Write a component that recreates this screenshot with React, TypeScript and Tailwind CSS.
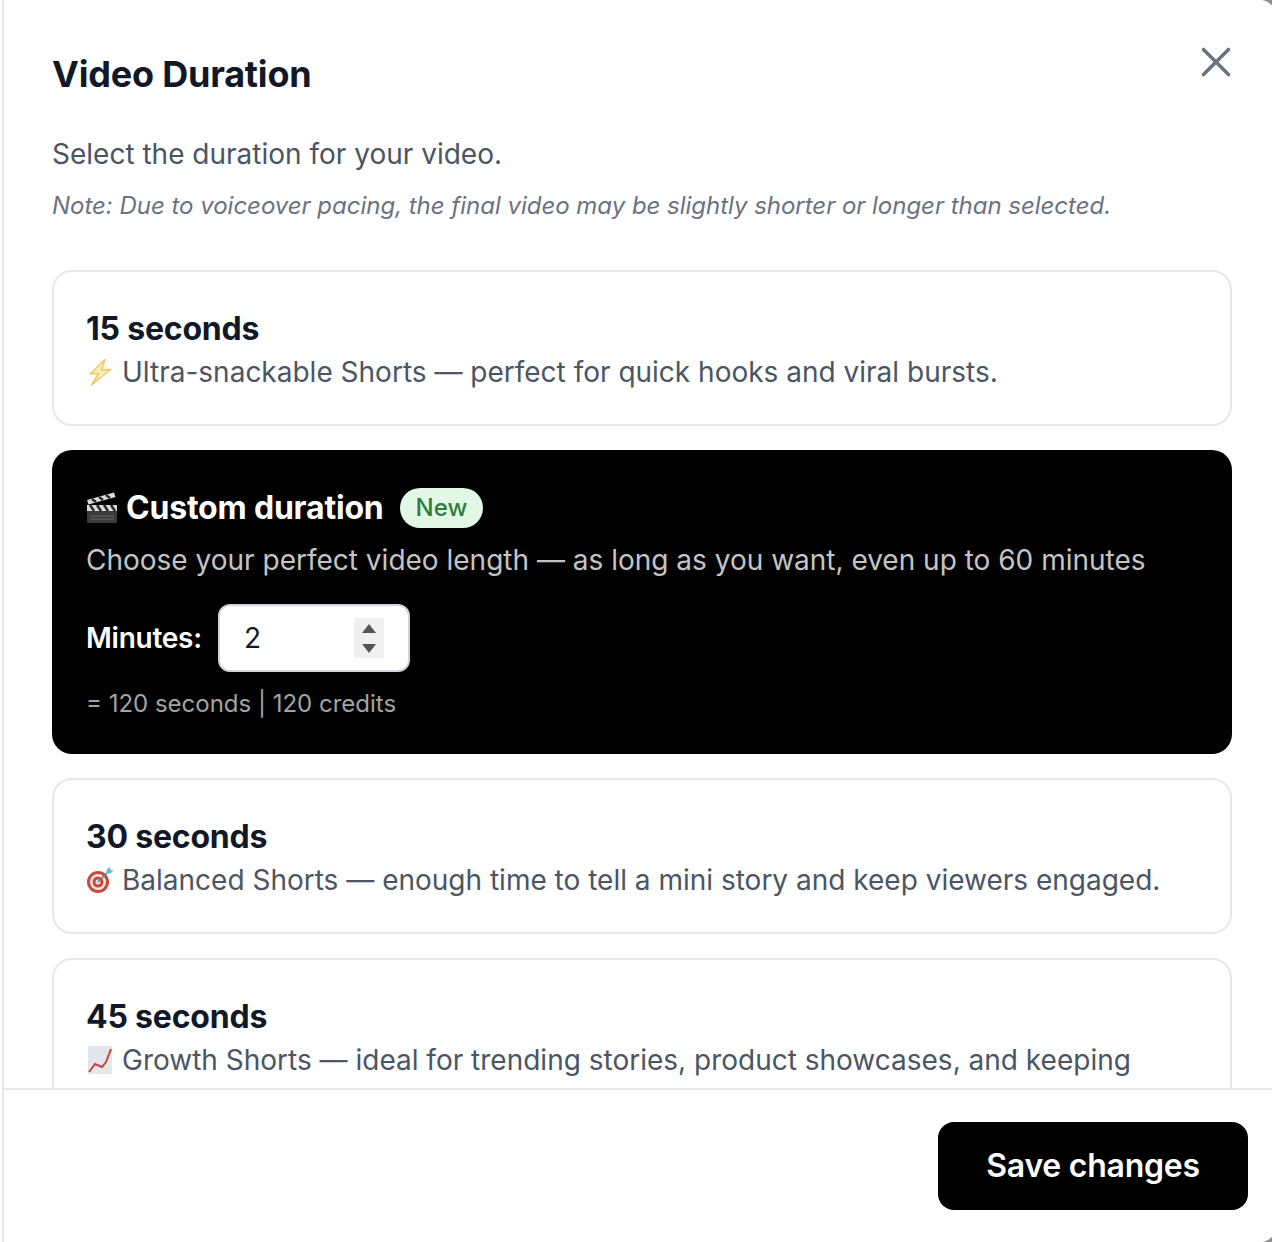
import { X } from "lucide-react";

const FONT = "font-['Inter','Noto_Sans',sans-serif]";

function BoltIcon() {
  return (
    <svg width="28" height="28" viewBox="0 0 28 28" className="shrink-0">
      <path
        d="M19 1.5 L4 16 L12.5 15.5 L5.5 27 L24.5 11.5 L15.5 12 Z"
        fill="#fdeeb5"
        stroke="#f8c566"
        strokeWidth="1.5"
        strokeLinejoin="round"
      />
    </svg>
  );
}

function TargetIcon() {
  return (
    <svg width="28" height="28" viewBox="0 0 28 28" className="shrink-0">
      <circle cx="12" cy="16" r="11" fill="#c8483c" />
      <circle cx="12" cy="16" r="8" fill="#f3e6e0" />
      <circle cx="12" cy="16" r="5.5" fill="#c8483c" />
      <circle cx="12" cy="16" r="2.5" fill="#f3e6e0" />
      <path d="M12 16 L22 6" stroke="#6b7a80" strokeWidth="1.6" />
      <path d="M20 8 L21 3 L24 1 L24.5 4 L27.5 4.5 L25 7 L21 8 Z" fill="#6cbccb" />
    </svg>
  );
}

function ChartIcon() {
  return (
    <svg width="28" height="28" viewBox="0 0 28 28" className="shrink-0">
      <rect x="2" y="0" width="24" height="28" fill="#e3e7ec" />
      <path d="M3 26 L9 18 L16 21 L20 16 L25 3" fill="none" stroke="#c8443c" strokeWidth="2" />
    </svg>
  );
}

function ClapperIcon() {
  return (
    <svg width="32" height="32" viewBox="0 0 32 32" className="shrink-0">
      <rect x="1" y="13" width="30" height="18" rx="1" fill="#3a3a3a" />
      <rect x="1" y="13" width="30" height="6" fill="#dcdcdc" />
      <path d="M4 13 L8 19 M11 13 L15 19 M18 13 L22 19 M25 13 L29 19" stroke="#2b2b2b" strokeWidth="2.5" />
      <path d="M1 8 L28 0.5 L29.5 5 L2.5 12.5 Z" fill="#dcdcdc" />
      <path d="M6 7 L10 10 M13 5 L17 8 M20 3 L24 6" stroke="#2b2b2b" strokeWidth="2.5" />
      <path d="M4 24 H28 M4 27 H28" stroke="#666666" strokeWidth="1" />
    </svg>
  );
}

function OptionCard({
  title,
  icon,
  description,
}: {
  title: string;
  icon: React.ReactNode;
  description: string;
}) {
  return (
    <div className="rounded-[20px] border-2 border-[#e5e7eb] bg-white px-[32px] pt-[37px] pb-[32px]">
      <h3 className="text-[32px] leading-[40px] font-bold tracking-[-0.2px] text-[#111827]">{title}</h3>
      <div className="mt-[3px] flex items-center gap-[8px] text-[28px] leading-[40px] text-[#4b5563]">
        {icon}
        <span>{description}</span>
      </div>
    </div>
  );
}

export default function App() {
  return (
    <div className={`${FONT} h-[1242px] w-[1272px] overflow-hidden border-l-[2px] border-white bg-[#8f8f8f]`}>
      <div className="flex h-full w-[1274px] flex-col overflow-hidden rounded-r-[16px] border-l-[2px] border-[#e5e7eb] bg-white">
        <div className="relative min-h-0 flex-1 overflow-hidden pt-[50px] pr-[44px] pl-[48px]">
          <button type="button" className="absolute top-[37px] right-[35px] text-[#6b7280]">
            <X size={50} strokeWidth={1.7} />
          </button>
          <h2 className="text-[36px] leading-[48px] font-bold tracking-[-0.2px] text-[#111827]">Video Duration</h2>
          <p className="mt-[36px] text-[28px] leading-[40px] text-[#4b5563]">
            Select the duration for your video.
          </p>
          <p className="mt-[16px] text-[24px] leading-[32px] tracking-[-0.02px] text-[#6b7280] italic">
            Note: Due to voiceover pacing, the final video may be slightly shorter or longer than selected.
          </p>
          <div className="mt-[48px] flex flex-col gap-[24px]">
            <OptionCard
              title="15 seconds"
              icon={<BoltIcon />}
              description="Ultra-snackable Shorts — perfect for quick hooks and viral bursts."
            />
            <div className="rounded-[20px] bg-black px-[34px] pt-[38px] pb-[34px]">
              <div className="flex items-center">
                <ClapperIcon />
                <h3 className="ml-[8px] text-[32px] leading-[40px] font-bold tracking-[-0.2px] text-white">
                  Custom duration
                </h3>
                <span className="ml-[16px] rounded-full bg-[#e3f7e6] px-[16px] py-[3px] text-[24px] leading-[34px] font-medium text-[#2f7d3b]">
                  New
                </span>
              </div>
              <p className="mt-[12px] text-[28px] leading-[40px] text-[#c4c4c4]">
                Choose your perfect video length — as long as you want, even up to 60 minutes
              </p>
              <div className="mt-[24px] flex items-center gap-[16px]">
                <span className="text-[28px] leading-[40px] font-semibold tracking-[-0.25px] text-white">Minutes:</span>
                <div className="flex h-[68px] w-[192px] items-center rounded-[12px] border-2 border-[#d1d5db] bg-white pr-[24px] pl-[24px]">
                  <span className="flex-1 text-[28px] text-[#111827]">2</span>
                  <div className="flex h-[40px] w-[30px] flex-col items-center justify-center gap-[11px] bg-[#f0f0f0]">
                    <svg width="14" height="9" viewBox="0 0 14 9">
                      <path d="M7 0 L14 9 H0 Z" fill="#555555" />
                    </svg>
                    <svg width="14" height="9" viewBox="0 0 14 9">
                      <path d="M0 0 H14 L7 9 Z" fill="#555555" />
                    </svg>
                  </div>
                </div>
              </div>
              <p className="mt-[16px] text-[24px] leading-[32px] text-[#a3a3a3]">= 120 seconds | 120 credits</p>
            </div>
            <OptionCard
              title="30 seconds"
              icon={<TargetIcon />}
              description="Balanced Shorts — enough time to tell a mini story and keep viewers engaged."
            />
            <OptionCard
              title="45 seconds"
              icon={<ChartIcon />}
              description="Growth Shorts — ideal for trending stories, product showcases, and keeping"
            />
          </div>
        </div>
        <div className="flex h-[154px] shrink-0 items-start justify-end border-t-2 border-[#e5e7eb] bg-white pt-[32px] pr-[28px]">
          <button
            type="button"
            className="flex h-[88px] w-[310px] items-center justify-center rounded-[16px] bg-black text-[32px] font-semibold tracking-[-0.25px] text-white"
          >
            Save changes
          </button>
        </div>
      </div>
    </div>
  );
}
